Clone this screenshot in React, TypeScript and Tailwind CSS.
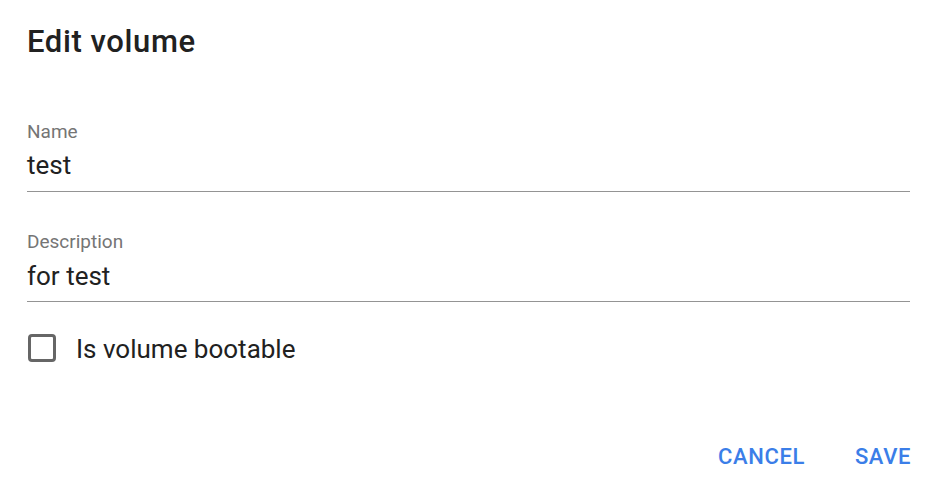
import { useState } from 'react'

function Field({ label, value, gap = 8 }: { label: string; value: string; gap?: number }) {
  return (
    <div className="pt-px border-b border-[#949494]">
      <div className="text-[19px] leading-[22px] text-[#757575]">{label}</div>
      <div
        className={`${gap === 8 ? 'pt-[8px] pb-[10px]' : 'pt-[7px] pb-[11px]'} text-[26px] leading-[30px] text-[#212121]`}
      >
        {value}
      </div>
    </div>
  )
}

export default function App() {
  const [bootable, setBootable] = useState(false)

  return (
    <div
      className="w-[940px] h-[494px] bg-white flex flex-col pl-[27px] pr-[30px]"
      style={{ fontFamily: 'Roboto, "Liberation Sans", sans-serif' }}
    >
      <h2 className="mt-[24px] text-[31px] leading-[36px] font-medium tracking-[0.6px] text-[#212121]">Edit volume</h2>

      <div className="mt-[60px]">
        <Field label="Name" value="test" gap={7} />
      </div>
      <div className="mt-[38px]">
        <Field label="Description" value="for test" />
      </div>

      <label className="mt-[30px] flex items-center cursor-pointer">
        <span
          onClick={() => setBootable(!bootable)}
          className="ml-px w-[28px] h-[28px] border-[3px] border-[#666666] rounded-[4px]"
        />
        <span className="ml-[20px] pt-[2px] text-[26px] leading-[30px] text-[#212121]">Is volume bootable</span>
      </label>

      <div className="mt-auto mb-[23px] flex justify-end gap-[50px] -mr-px">
        <button className="text-[22px] leading-[28px] font-medium tracking-[0.6px] text-[#3b7ee8]">CANCEL</button>
        <button className="text-[22px] leading-[28px] font-medium tracking-[0.6px] text-[#3b7ee8]">SAVE</button>
      </div>
    </div>
  )
}
